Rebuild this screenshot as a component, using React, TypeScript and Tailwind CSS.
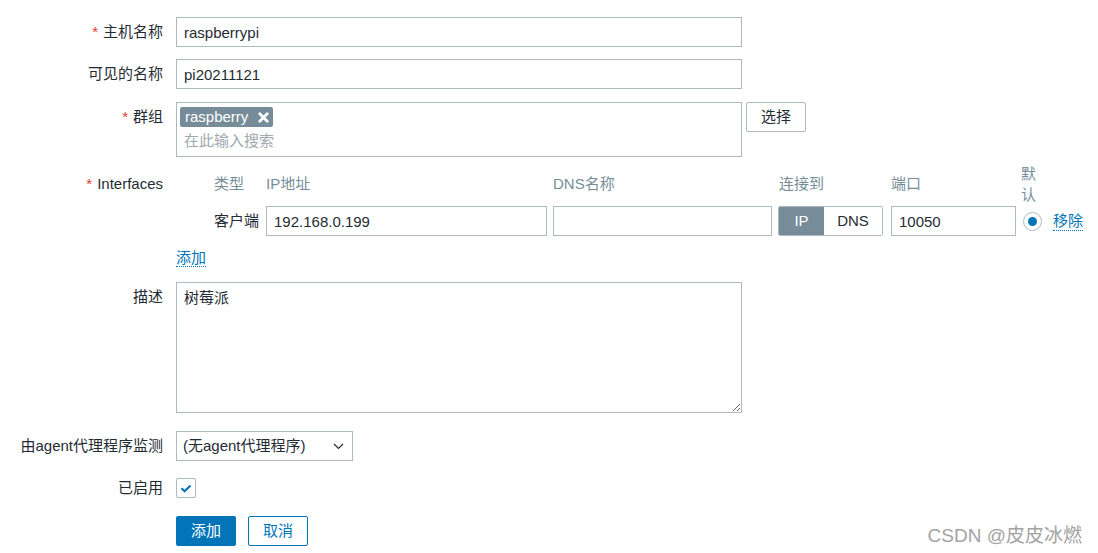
import React from "react";

const font = "font-['Liberation_Sans','Noto_Sans_CJK_SC',sans-serif]";

function Req() {
  return <span className="mr-[5px] text-[#e33734]">*</span>;
}

function Row({
  label,
  required,
  className = "",
  children,
}: {
  label: string;
  required?: boolean;
  className?: string;
  children: React.ReactNode;
}) {
  return (
    <div className={`flex ${className}`}>
      <div className="w-[163px] shrink-0 text-right leading-[30px] whitespace-nowrap">
        {required && <Req />}
        {label}
      </div>
      <div className="ml-[13px]">{children}</div>
    </div>
  );
}

function TextInput({ value, width }: { value: string; width: string }) {
  return (
    <input
      readOnly
      defaultValue={value}
      className={`${width} h-[30px] border border-[#acbbc2] bg-white px-[7px] text-[15px] text-[#1f2c33] outline-none`}
    />
  );
}

export default function App() {
  return (
    <div
      className={`relative h-[553px] w-full overflow-hidden bg-white pt-[17px] text-[15px] text-[#1f2c33] ${font}`}
    >
      <Row label="主机名称" required>
        <TextInput value="raspberrypi" width="w-[566px]" />
      </Row>

      <Row label="可见的名称" className="mt-[12px]">
        <TextInput value="pi20211121" width="w-[566px]" />
      </Row>

      <Row label="群组" required className="mt-[13px]">
        <div className="flex items-start gap-[4px]">
          <div className="h-[55px] w-[566px] border border-[#acbbc2] pl-[3px] pt-[4px]">
            <div className="flex h-[20px] w-[93px] items-center justify-between rounded-[2px] bg-[#768d99] pl-[5px] pr-[4px] leading-[20px] text-white">
              <span>raspberry</span>
              <svg width="11" height="11" viewBox="0 0 11 11">
                <path
                  d="M1.8 1.8 L9.2 9.2 M9.2 1.8 L1.8 9.2"
                  stroke="white"
                  strokeWidth="2.8"
                  strokeLinecap="round"
                />
              </svg>
            </div>
            <div className="mt-[4px] pl-[4px] leading-[20px] text-[#a0a9ae]">在此输入搜索</div>
          </div>
          <button className="h-[30px] w-[60px] rounded-[2px] border border-[#acbbc2] bg-white text-[15px] text-[#1f2c33]">
            选择
          </button>
        </div>
      </Row>

      <Row label="Interfaces" required className="mt-[12px]">
        <div className="ml-[38px]">
          <div className="flex h-[30px] items-center text-[#768d99]">
            <div className="w-[52px]">类型</div>
            <div className="w-[287px]">IP地址</div>
            <div className="w-[225px]">DNS名称</div>
            <div className="w-[113px] pl-px">连接到</div>
            <div className="w-[130px]">端口</div>
            <div className="w-[20px] leading-[21px]">默认</div>
          </div>
          <div className="mt-[7px] flex h-[30px] items-center">
            <div className="w-[52px]">客户端</div>
            <div className="w-[287px]">
              <TextInput value="192.168.0.199" width="w-[281px]" />
            </div>
            <div className="w-[225px]">
              <TextInput value="" width="w-[219px]" />
            </div>
            <div className="w-[113px]">
              <div className="flex h-[30px] w-[105px] overflow-hidden rounded-[2px] border border-[#acbbc2]">
                <div className="flex w-[45px] items-center justify-center bg-[#768d99] text-white">IP</div>
                <div className="flex flex-1 items-center justify-center bg-white">DNS</div>
              </div>
            </div>
            <div className="w-[130px]">
              <TextInput value="10050" width="w-[125px]" />
            </div>
            <div className="w-[32px] pl-[2px]">
              <div className="flex h-[19px] w-[19px] items-center justify-center rounded-full border border-[#acbbc2] bg-white">
                <div className="h-[9px] w-[9px] rounded-full bg-[#0275b8]" />
              </div>
            </div>
            <span className="border-b border-dotted border-[#0275b8] leading-[18px] text-[#0275b8]">移除</span>
          </div>
        </div>
      </Row>

      <div className="ml-[176px] mt-[13px] h-[20px] leading-[18px]">
        <span className="border-b border-dotted border-[#0275b8] text-[#0275b8]">添加</span>
      </div>

      <Row label="描述" className="mt-[13px]">
        <textarea
          readOnly
          defaultValue="树莓派"
          className="block h-[131px] w-[566px] border border-[#acbbc2] bg-white px-[7px] pt-[4px] text-[15px] leading-[22px] text-[#1f2c33] outline-none"
        />
      </Row>

      <Row label="由agent代理程序监测" className="mt-[18px]">
        <div className="flex h-[30px] w-[177px] items-center justify-between border border-[#acbbc2] bg-white pl-[6px] pr-[8px]">
          <span>(无agent代理程序)</span>
          <svg width="11" height="7" viewBox="0 0 11 7">
            <path d="M1 1 L5.5 5.5 L10 1" fill="none" stroke="#1f2c33" strokeWidth="1.2" />
          </svg>
        </div>
      </Row>

      <Row label="已启用" className="mt-[12px]">
        <div className="flex h-[30px] items-center">
          <div className="flex h-[20px] w-[20px] items-center justify-center rounded-[2px] border border-[#acbbc2] bg-white">
            <svg width="12" height="9" viewBox="0 0 12 9">
              <path d="M1.5 4.2 L4.6 7.2 L10.5 1.5" fill="none" stroke="#0275b8" strokeWidth="2.2" />
            </svg>
          </div>
        </div>
      </Row>

      <div className="ml-[176px] mt-[13px] flex gap-[12px]">
        <button className="h-[30px] w-[60px] rounded-[2px] bg-[#0275b8] text-[15px] text-white">添加</button>
        <button className="h-[30px] w-[60px] rounded-[2px] border border-[#0275b8] bg-white text-[15px] text-[#0275b8]">
          取消
        </button>
      </div>

      <div className="absolute bottom-[3px] right-[16px] text-[19px] text-[#a3a3a3] [text-shadow:0_0_1px_#ffffff]">
        CSDN @皮皮冰燃
      </div>
    </div>
  );
}
